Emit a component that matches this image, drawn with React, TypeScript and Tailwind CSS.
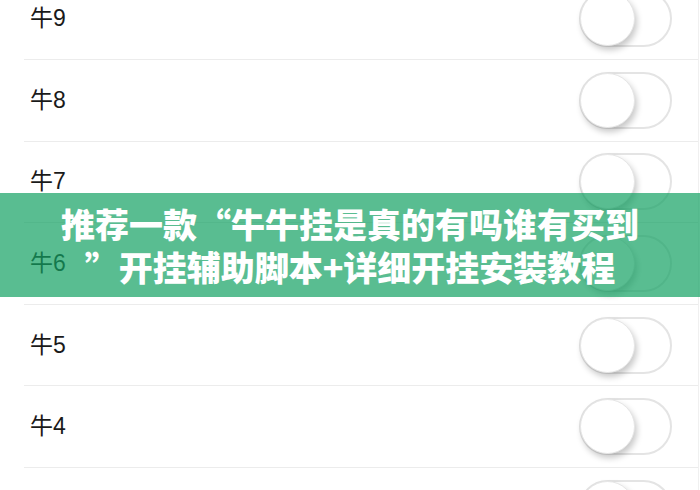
const rows = ['牛9', '牛8', '牛7', '牛6', '牛5', '牛4', '牛3']

const Toggle = () => (
    <div className="relative w-[93px] h-[57px] rounded-full border-2 border-[#e4e4e4] bg-white shrink-0">
        {/* knob sits left: switch is off */}
        <div className="absolute -left-[1px] -top-[1px] w-[55px] h-[55px] rounded-full bg-white border border-[#e6e6e6] shadow-[2px_4px_6px_rgba(0,0,0,0.22)]"></div>
    </div>
)

const App = () => {
    return (
        <div className="relative w-[700px] h-[490px] overflow-hidden bg-white" style={{ fontFamily: '"Liberation Sans", "Noto Sans CJK SC", sans-serif' }}>
            {/* Settings list */}
            <div className="-mt-[21.6px] border-r border-[#f0f0f0] w-[699px]">
                {rows.map((name) => (
                    <div key={name} className="ml-6 h-[81.6px] flex items-center justify-between border-b border-[#ececec] pl-[6px] pr-[26px]">
                        <span className="text-[23px] text-[#1a1a1a] leading-none">{name}</span>
                        <Toggle />
                    </div>
                ))}
            </div>

            {/* Green title banner over the list */}
            <div className="absolute left-0 top-[193px] w-full h-[104px] bg-[#12a163]/70 flex flex-col items-center justify-center">
                <div className="text-white font-black text-[34px] leading-[43px] text-center" style={{ fontFamily: '"Noto Sans CJK SC", sans-serif' }}>
                    <div>推荐一款“牛牛挂是真的有吗谁有买到</div>
                    <div>”开挂辅助脚本+详细开挂安装教程</div>
                </div>
            </div>
        </div>
    )
}

export default App
